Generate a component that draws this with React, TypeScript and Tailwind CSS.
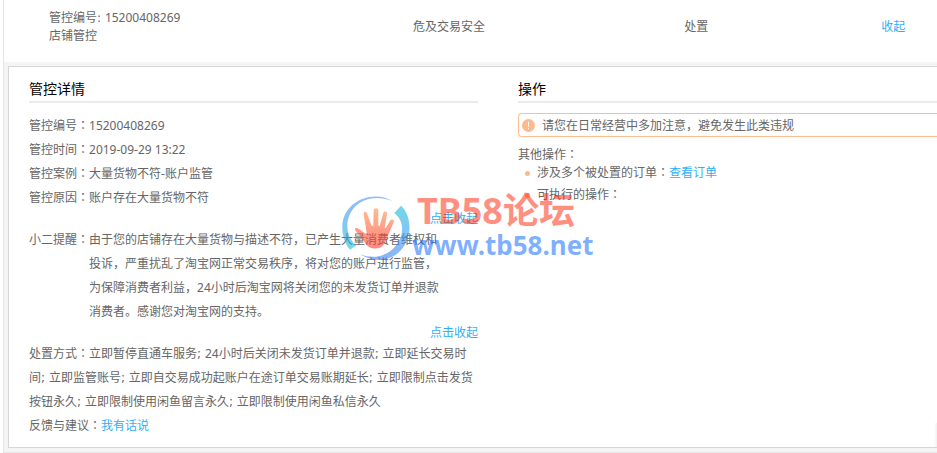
import React from "react";

const details = [
  { label: "管控编号", value: "15200408269" },
  { label: "管控时间", value: "2019-09-29 13:22" },
  { label: "管控案例", value: "大量货物不符-账户监管" },
  { label: "管控原因", value: "账户存在大量货物不符" },
];

const measures = [
  "立即暂停直通车服务",
  "24小时后关闭未发货订单并退款",
  "立即延长交易时间",
  "立即监管账号",
  "立即自交易成功起账户在途订单交易账期延长",
  "立即限制点击发货按钮永久",
  "立即限制使用闲鱼留言永久",
  "立即限制使用闲鱼私信永久",
];

// Full-width colon, centred in its cell
const Colon: React.FC = () => (
  <span className="font-['Noto_Sans_CJK_TC',sans-serif] leading-none">：</span>
);

// Half-width mark followed by a wide space
const Mark: React.FC<{ children: React.ReactNode }> = ({ children }) => (
  <span className="font-['DejaVu_Sans',sans-serif] leading-none">
    {children}{" "}
  </span>
);

const Link: React.FC<{ children: React.ReactNode }> = ({ children }) => (
  <a href="#" className="text-[#2fb0f5]">
    {children}
  </a>
);

const Toggle: React.FC = () => (
  <div className="flex justify-end leading-[18px]">
    <button type="button" className="cursor-pointer text-[#2fb0f5]">
      点击收起
    </button>
  </div>
);

const Heading: React.FC<{ children: React.ReactNode }> = ({ children }) => (
  <h2 className="border-b-2 border-[#ebebeb] pb-0.5 text-sm leading-5 text-black">
    {children}
  </h2>
);

const Logo: React.FC = () => (
  <svg
    viewBox="15 20 216 210"
    className="h-[70px] w-[72px] shrink-0"
    aria-hidden="true"
  >
    <defs>
      <linearGradient id="left" x1="0" y1="0" x2="0" y2="1">
        <stop offset="0" stopColor="#3b8ff5" />
        <stop offset="0.5" stopColor="#2f9df0" />
        <stop offset="1" stopColor="#17bdd8" />
      </linearGradient>
      <linearGradient id="right" x1="0" y1="0" x2="0" y2="1">
        <stop offset="0" stopColor="#10bcd4" />
        <stop offset="0.5" stopColor="#2b9cf0" />
        <stop offset="1" stopColor="#3c7cf2" />
      </linearGradient>
      <linearGradient id="hand" x1="0" y1="0" x2="0" y2="1">
        <stop offset="0" stopColor="#ff8a40" />
        <stop offset="0.6" stopColor="#ff4f30" />
        <stop offset="1" stopColor="#ff3525" />
      </linearGradient>
    </defs>
    <g opacity="0.58">
      <path
        fill="url(#left)"
        d="M172 44C110 8 22 48 22 122C22 152 32 175 45 190L64 177C48 165 38 145 37 122C36 60 95 15 172 44Z"
      />
      <path
        fill="url(#right)"
        d="M198 58C222 80 230 120 218 155C200 215 135 240 75 204C130 225 180 200 198 150C206 122 200 98 178 80Z"
      />
    </g>
    <path
      opacity="0.58"
      fill="url(#hand)"
      d="M60 129C60 123 68 124 72 128L96 145L86 84C85 75 93 73 96 81L110 119L115 118L116 72C117 64 129 64 130 72L130 118L134 119L145 80C148 72 158 75 156 84L149 124L152 126L165 103C170 96 179 100 176 108L156 155C151 172 142 184 127 186C108 188 96 181 88 166C80 150 61 138 60 129Z"
    />
  </svg>
);

const Watermark: React.FC = () => (
  <div className="pointer-events-none absolute top-[190px] left-[340px] flex items-center font-['Noto_Sans','Noto_Sans_CJK_SC',sans-serif] font-bold whitespace-nowrap">
    <Logo />
    <div className="pt-[3px] pb-1">
      <p className="pl-[5px] text-[36px] leading-9 text-[#ff2000]/50">
        TB58论坛
      </p>
      <p className="text-[26px] leading-8 text-[#0060ff]/50">www.tb58.net</p>
    </div>
  </div>
);

const App: React.FC = () => {
  return (
    <main className="relative overflow-hidden bg-white pl-[3px] font-['Noto_Sans','Noto_Sans_CJK_SC',sans-serif] text-xs text-[#666]">
      <div className="border-b border-l border-[#e6e6e6] bg-[#f4f4f4]">
        {/* Summary row */}
        <table className="w-full table-fixed bg-white text-center leading-[18px]">
          <tbody>
            <tr>
              <td className="w-[37.6%] pt-[9px] pb-[17px] pl-[45px] text-left">
                管控编号<Mark>:</Mark>15200408269
                <br />
                店铺管控
              </td>
              <td className="w-[20.2%] pt-[9px] pb-[17px]">危及交易安全</td>
              <td className="w-[32.8%] pt-[9px] pb-[17px]">处置</td>
              <td className="pt-[9px] pb-[17px]">
                <button type="button" className="cursor-pointer text-[#2fb0f5]">
                  收起
                </button>
              </td>
            </tr>
          </tbody>
        </table>

        {/* Detail panel */}
        <div className="mt-1 mb-1 ml-1 flex gap-10 border-y border-l border-[#d6d6d6] bg-white pt-3 pb-[9px] pl-5">
          <section className="w-[449px] shrink-0">
            <Heading>管控详情</Heading>
            <div className="pt-[11px] leading-6">
              {details.map((item) => (
                <p key={item.label}>
                  {item.label}
                  <Colon />
                  {item.value}
                </p>
              ))}
              <Toggle />
              <div className="flex pr-[34px]">
                <span className="shrink-0">
                  小二提醒
                  <Colon />
                </span>
                <p>
                  由于您的店铺存在大量货物与描述不符，已产生大量消费者维权和投诉，严重扰乱了淘宝网正常交易秩序，将对您的账户进行监管，为保障消费者利益，24小时后淘宝网将关闭您的未发货订单并退款消费者。感谢您对淘宝网的支持。
                </p>
              </div>
              <Toggle />
              <p className="pr-1">
                处置方式
                <Colon />
                {measures.map((measure, i) => (
                  <React.Fragment key={measure}>
                    {i > 0 && <Mark>;</Mark>}
                    {measure}
                  </React.Fragment>
                ))}
              </p>
              <p>
                反馈与建议
                <Colon />
                <Link>我有话说</Link>
              </p>
            </div>
          </section>

          <section className="flex-1">
            <Heading>操作</Heading>
            <div className="mt-2.5 flex h-6 items-center gap-[7px] rounded-l-sm border-y border-l border-[#ffbe8f] pl-[3px]">
              <svg viewBox="0 0 13 13" className="size-[13px]" aria-hidden="true">
                <circle cx="6.5" cy="6.5" r="6.5" fill="#ffb98a" />
                <path d="M6.5 3v4.5M6.5 9v1.2" stroke="#fff" strokeWidth="1" />
              </svg>
              <p className="pt-px">请您在日常经营中多加注意，避免发生此类违规</p>
            </div>
            <div className="mt-[9px] leading-[18px]">
              <p>
                其他操作
                <Colon />
              </p>
              <ul className="space-y-1">
                <li className="flex items-center gap-[7px] pl-[7px]">
                  <span className="size-[5px] rounded-full bg-[#ffb98a]" />
                  <p>
                    涉及多个被处置的订单
                    <Colon />
                    <Link>查看订单</Link>
                  </p>
                </li>
                <li className="flex items-center gap-[7px] pl-[7px]">
                  <span className="size-[5px] rounded-full bg-[#ffb98a]" />
                  <p>
                    可执行的操作
                    <Colon />
                  </p>
                </li>
              </ul>
            </div>
          </section>
        </div>
      </div>

      <Watermark />
      {/* Shadow of the floating toolbar past the right edge */}
      <div className="absolute right-0 bottom-1.5 h-6 w-[3px] bg-linear-to-r from-white to-[#f0f0f0]" />
    </main>
  );
};

export default App;
